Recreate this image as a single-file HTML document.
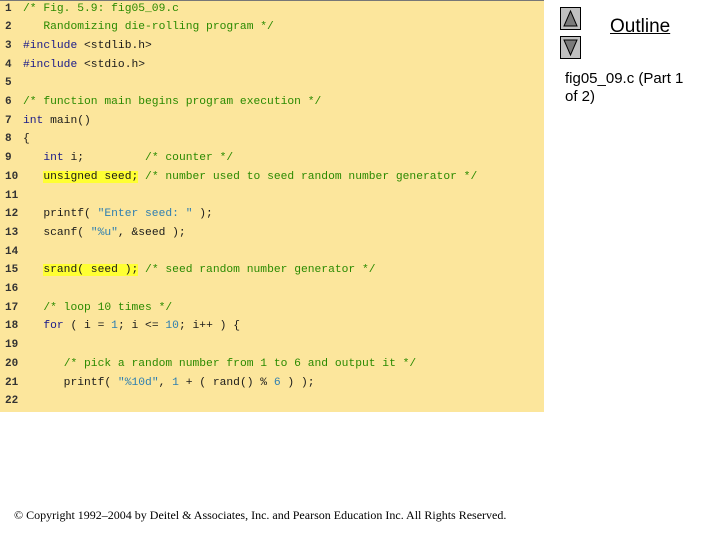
<!DOCTYPE html>
<html><head><meta charset="utf-8"><style>
html,body{margin:0;padding:0;background:#fff;width:720px;height:540px;overflow:hidden;position:relative}
#panel{position:absolute;left:0;top:0;width:544px;height:412px;background:#fce69c;border-top:1px solid #777;box-sizing:border-box}
.l{position:absolute;left:0;height:14px;line-height:14px;font-family:"Liberation Mono","DejaVu Sans Mono",monospace;font-size:11.3px;white-space:pre;color:#1a1a1a}
.n{position:absolute;left:5px;font-weight:bold;color:#333;font-size:11px}
.c{position:absolute;left:23px}
.g{color:#2a8a00}.b{color:#1a1a8a}.s{color:#2f7fb0}.h{background:#ffff33}
.btn{position:absolute;left:560px;width:19px;height:21px;background:#c0c0c0;border:1px solid #000}
#out{position:absolute;left:610px;top:16px;font-family:"Liberation Sans",sans-serif;font-size:19px;text-decoration:underline;color:#000}
#cap{position:absolute;left:565px;top:70px;font-family:"Liberation Sans",sans-serif;font-size:15px;line-height:18px;color:#000}
#foot{position:absolute;left:14px;top:508px;font-family:"Liberation Serif",serif;font-size:12px;color:#000;white-space:nowrap}
</style></head><body>
<div id="panel">
<div class="l" style="top:0.5px"><span class="n">1</span><span class="c"><span class="g">/* Fig. 5.9: fig05_09.c</span></span></div>
<div class="l" style="top:19.2px"><span class="n">2</span><span class="c"><span class="g">   Randomizing die-rolling program */</span></span></div>
<div class="l" style="top:37.9px"><span class="n">3</span><span class="c"><span class="b">#include</span> &lt;stdlib.h&gt;</span></div>
<div class="l" style="top:56.6px"><span class="n">4</span><span class="c"><span class="b">#include</span> &lt;stdio.h&gt;</span></div>
<div class="l" style="top:75.3px"><span class="n">5</span></div>
<div class="l" style="top:94px"><span class="n">6</span><span class="c"><span class="g">/* function main begins program execution */</span></span></div>
<div class="l" style="top:112.7px"><span class="n">7</span><span class="c"><span class="b">int</span> main()</span></div>
<div class="l" style="top:131.4px"><span class="n">8</span><span class="c">{</span></div>
<div class="l" style="top:150.1px"><span class="n">9</span><span class="c">   <span class="b">int</span> i;         <span class="g">/* counter */</span></span></div>
<div class="l" style="top:168.8px"><span class="n">10</span><span class="c">   <span class="h">unsigned seed;</span> <span class="g">/* number used to seed random number generator */</span></span></div>
<div class="l" style="top:187.5px"><span class="n">11</span></div>
<div class="l" style="top:206.2px"><span class="n">12</span><span class="c">   printf( <span class="s">"Enter seed: "</span> );</span></div>
<div class="l" style="top:224.9px"><span class="n">13</span><span class="c">   scanf( <span class="s">"%u"</span>, &amp;seed );</span></div>
<div class="l" style="top:243.6px"><span class="n">14</span></div>
<div class="l" style="top:262.3px"><span class="n">15</span><span class="c">   <span class="h">srand( seed );</span> <span class="g">/* seed random number generator */</span></span></div>
<div class="l" style="top:281px"><span class="n">16</span></div>
<div class="l" style="top:299.7px"><span class="n">17</span><span class="c">   <span class="g">/* loop 10 times */</span></span></div>
<div class="l" style="top:318.4px"><span class="n">18</span><span class="c">   <span class="b">for</span> ( i = <span class="s">1</span>; i &lt;= <span class="s">10</span>; i++ ) {</span></div>
<div class="l" style="top:337.1px"><span class="n">19</span></div>
<div class="l" style="top:355.8px"><span class="n">20</span><span class="c">      <span class="g">/* pick a random number from 1 to 6 and output it */</span></span></div>
<div class="l" style="top:374.5px"><span class="n">21</span><span class="c">      printf( <span class="s">"%10d"</span>, <span class="s">1</span> + ( rand() % <span class="s">6</span> ) );</span></div>
<div class="l" style="top:393.2px"><span class="n">22</span></div>
</div>
<div class="btn" style="top:7px"><svg width="19" height="21"><polygon points="9.5,3 16,18 3,18" fill="#7a7a7a" stroke="#000" stroke-width="1"/></svg></div>
<div class="btn" style="top:36px"><svg width="19" height="21"><polygon points="3,3 16,3 9.5,18" fill="#7a7a7a" stroke="#000" stroke-width="1"/></svg></div>
<div id="out">Outline</div>
<div id="cap">fig05_09.c (Part 1<br>of 2)</div>
<div id="foot">© Copyright 1992–2004 by Deitel &amp; Associates, Inc. and Pearson Education Inc. All Rights Reserved.</div>
</body></html>
